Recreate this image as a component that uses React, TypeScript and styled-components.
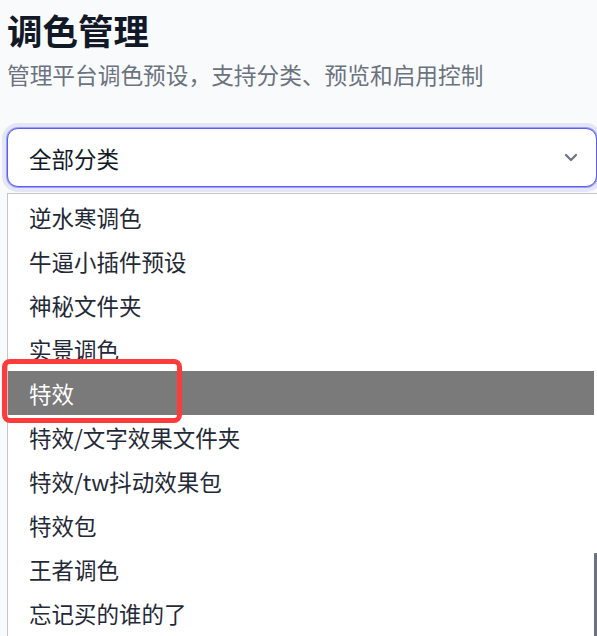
import React from "react";
import styled, { createGlobalStyle } from "styled-components";

const GlobalStyle = createGlobalStyle`
  html, body {
    margin: 0;
    padding: 0;
    background: #f9fafb;
    overflow: hidden;
  }
  body {
    font-family: "Noto Sans CJK SC", "Noto Sans", sans-serif;
    color: #111827;
  }
`;

const Page = styled.div`
  position: relative;
  width: 597px;
  height: 636px;
  padding: 8px 0 0 7px;
  box-sizing: border-box;
  overflow: hidden;
`;

const Title = styled.h1`
  margin: 0;
  font-size: 35.5px;
  line-height: 44px;
  font-weight: 700;
  color: #111827;
`;

const Subtitle = styled.p`
  margin: 7px 0 0 0;
  font-size: 22.7px;
  line-height: 32px;
  color: #6b7280;
`;

const SelectBox = styled.div`
  margin-top: 37px;
  width: 590px;
  height: 59px;
  box-sizing: border-box;
  border: 1px solid #5b5ef0;
  border-radius: 11px;
  background: #ffffff;
  box-shadow: 0 0 0 1px rgba(99, 102, 241, 0.55), 0 0 0 5px #e4e5f7;
  display: flex;
  align-items: center;
  justify-content: space-between;
  padding: 0 18px 0 21px;
  font-size: 22.5px;
  color: #111827;
`;

const Chevron = styled.svg`
  width: 14px;
  height: 9px;
  flex: none;
`;

const List = styled.div`
  position: relative;
  margin-top: 6px;
  width: 594px;
  height: 460px;
  box-sizing: border-box;
  border: 1px solid #c6c6c6;
  border-right: none;
  background: #ffffff;
  padding: 1px 7px 0 0;
`;

const Item = styled.div<{ $active?: boolean }>`
  height: 44px;
  display: flex;
  align-items: center;
  padding-left: 21px;
  font-size: 22.5px;
  color: ${(p) => (p.$active ? "#ffffff" : "#1f2937")};
  background: ${(p) => (p.$active ? "#7a7a7a" : "transparent")};
  white-space: nowrap;
`;

const ScrollThumb = styled.div`
  position: absolute;
  right: 2px;
  top: 359px;
  width: 5px;
  height: 120px;
  background: #6b7280;
  border-radius: 1px 1px 0 0;
`;

const Annotation = styled.div`
  position: absolute;
  left: 2px;
  top: 359px;
  width: 180px;
  height: 64px;
  box-sizing: border-box;
  border: 5px solid #ff3b3b;
  border-radius: 8px;
  pointer-events: none;
`;

const items = [
  "逆水寒调色",
  "牛逼小插件预设",
  "神秘文件夹",
  "实景调色",
  "特效",
  "特效/文字效果文件夹",
  "特效/tw抖动效果包",
  "特效包",
  "王者调色",
  "忘记买的谁的了",
];

export default function App() {
  return (
    <>
      <GlobalStyle />
      <Page>
        <Title>调色管理</Title>
        <Subtitle>管理平台调色预设，支持分类、预览和启用控制</Subtitle>
        <SelectBox>
          <span>全部分类</span>
          <Chevron viewBox="0 0 14 9" fill="none">
            <path
              d="M2 2l5 5 5-5"
              stroke="#6b7280"
              strokeWidth="2.2"
              strokeLinecap="round"
              strokeLinejoin="round"
            />
          </Chevron>
        </SelectBox>
        <List>
          {items.map((t, i) => (
            <Item key={t} $active={i === 4}>
              {t}
            </Item>
          ))}
          <ScrollThumb />
        </List>
        <Annotation />
      </Page>
    </>
  );
}
